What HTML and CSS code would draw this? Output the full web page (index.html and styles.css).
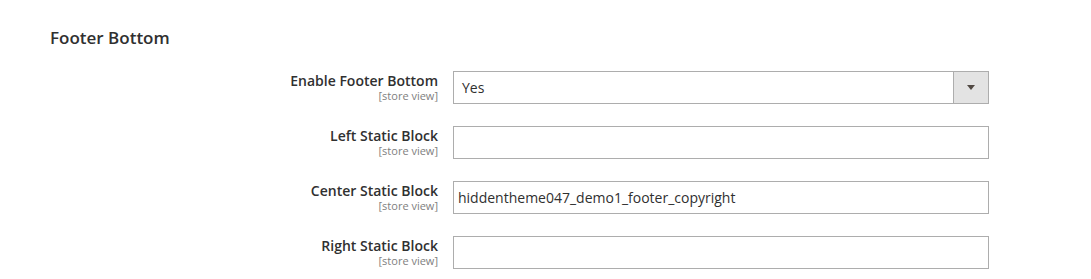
FILE: index.html
```html
<!DOCTYPE html>
<html lang="en">
<head>
  <meta charset="UTF-8">
  <title>Footer Bottom</title>
  <link rel="stylesheet" href="styles.css">
</head>
<body>
  <div class="section">
    <h2 class="section-title">Footer Bottom</h2>

    <div class="fields">
      <div class="field-row">
        <div class="label">
          <span class="label-text">Enable Footer Bottom</span>
          <span class="scope">[store view]</span>
        </div>
        <div class="control">
          <div class="select">
            <span class="select-value">Yes</span>
            <span class="select-arrow"></span>
          </div>
        </div>
      </div>

      <div class="field-row">
        <div class="label">
          <span class="label-text">Left Static Block</span>
          <span class="scope">[store view]</span>
        </div>
        <div class="control">
          <input type="text" class="input-text" value="">
        </div>
      </div>

      <div class="field-row">
        <div class="label">
          <span class="label-text">Center Static Block</span>
          <span class="scope">[store view]</span>
        </div>
        <div class="control">
          <input type="text" class="input-text" value="hiddentheme047_demo1_footer_copyright">
        </div>
      </div>

      <div class="field-row">
        <div class="label">
          <span class="label-text">Right Static Block</span>
          <span class="scope">[store view]</span>
        </div>
        <div class="control">
          <input type="text" class="input-text" value="">
        </div>
      </div>
    </div>
  </div>
</body>
</html>
```

FILE: styles.css
```css
body {
  margin: 0;
  background: #fff;
  font-family: "Open Sans", "Liberation Sans", sans-serif;
  color: #303030;
}
.section {
  padding: 26px 0 0 50px;
}
.section-title {
  margin: 0 0 21px;
  font-size: 17px;
  font-weight: 600;
  line-height: 24px;
  color: #303030;
}
.fields {
  display: flex;
  flex-direction: column;
  gap: 22px;
}
.field-row {
  display: grid;
  grid-template-columns: 388px 536px;
  column-gap: 15px;
}
.label {
  display: flex;
  flex-direction: column;
  align-items: flex-end;
  text-align: right;
}
.label-text {
  font-size: 14px;
  font-weight: 600;
  line-height: 19px;
}
.scope {
  font-size: 11px;
  line-height: 12px;
  color: #808080;
}
.select, .input-text {
  box-sizing: border-box;
  width: 536px;
  height: 33px;
  border: 1px solid #adadad;
  background: #fff;
}
.select {
  display: flex;
  align-items: center;
  position: relative;
}
.select-value {
  padding-left: 8px;
  font-size: 14px;
}
.select-arrow {
  position: absolute;
  top: 0;
  right: 0;
  width: 34px;
  height: 31px;
  border-left: 1px solid #adadad;
  background: #e3e3e3;
}
.select-arrow::after {
  content: "";
  position: absolute;
  left: 13px;
  top: 13px;
  border-left: 4px solid transparent;
  border-right: 4px solid transparent;
  border-top: 5px solid #514943;
}
.input-text {
  display: block;
  margin: 0;
  padding: 0 4px;
  font-family: inherit;
  font-size: 14px;
  color: #303030;
  outline: none;
}
```
